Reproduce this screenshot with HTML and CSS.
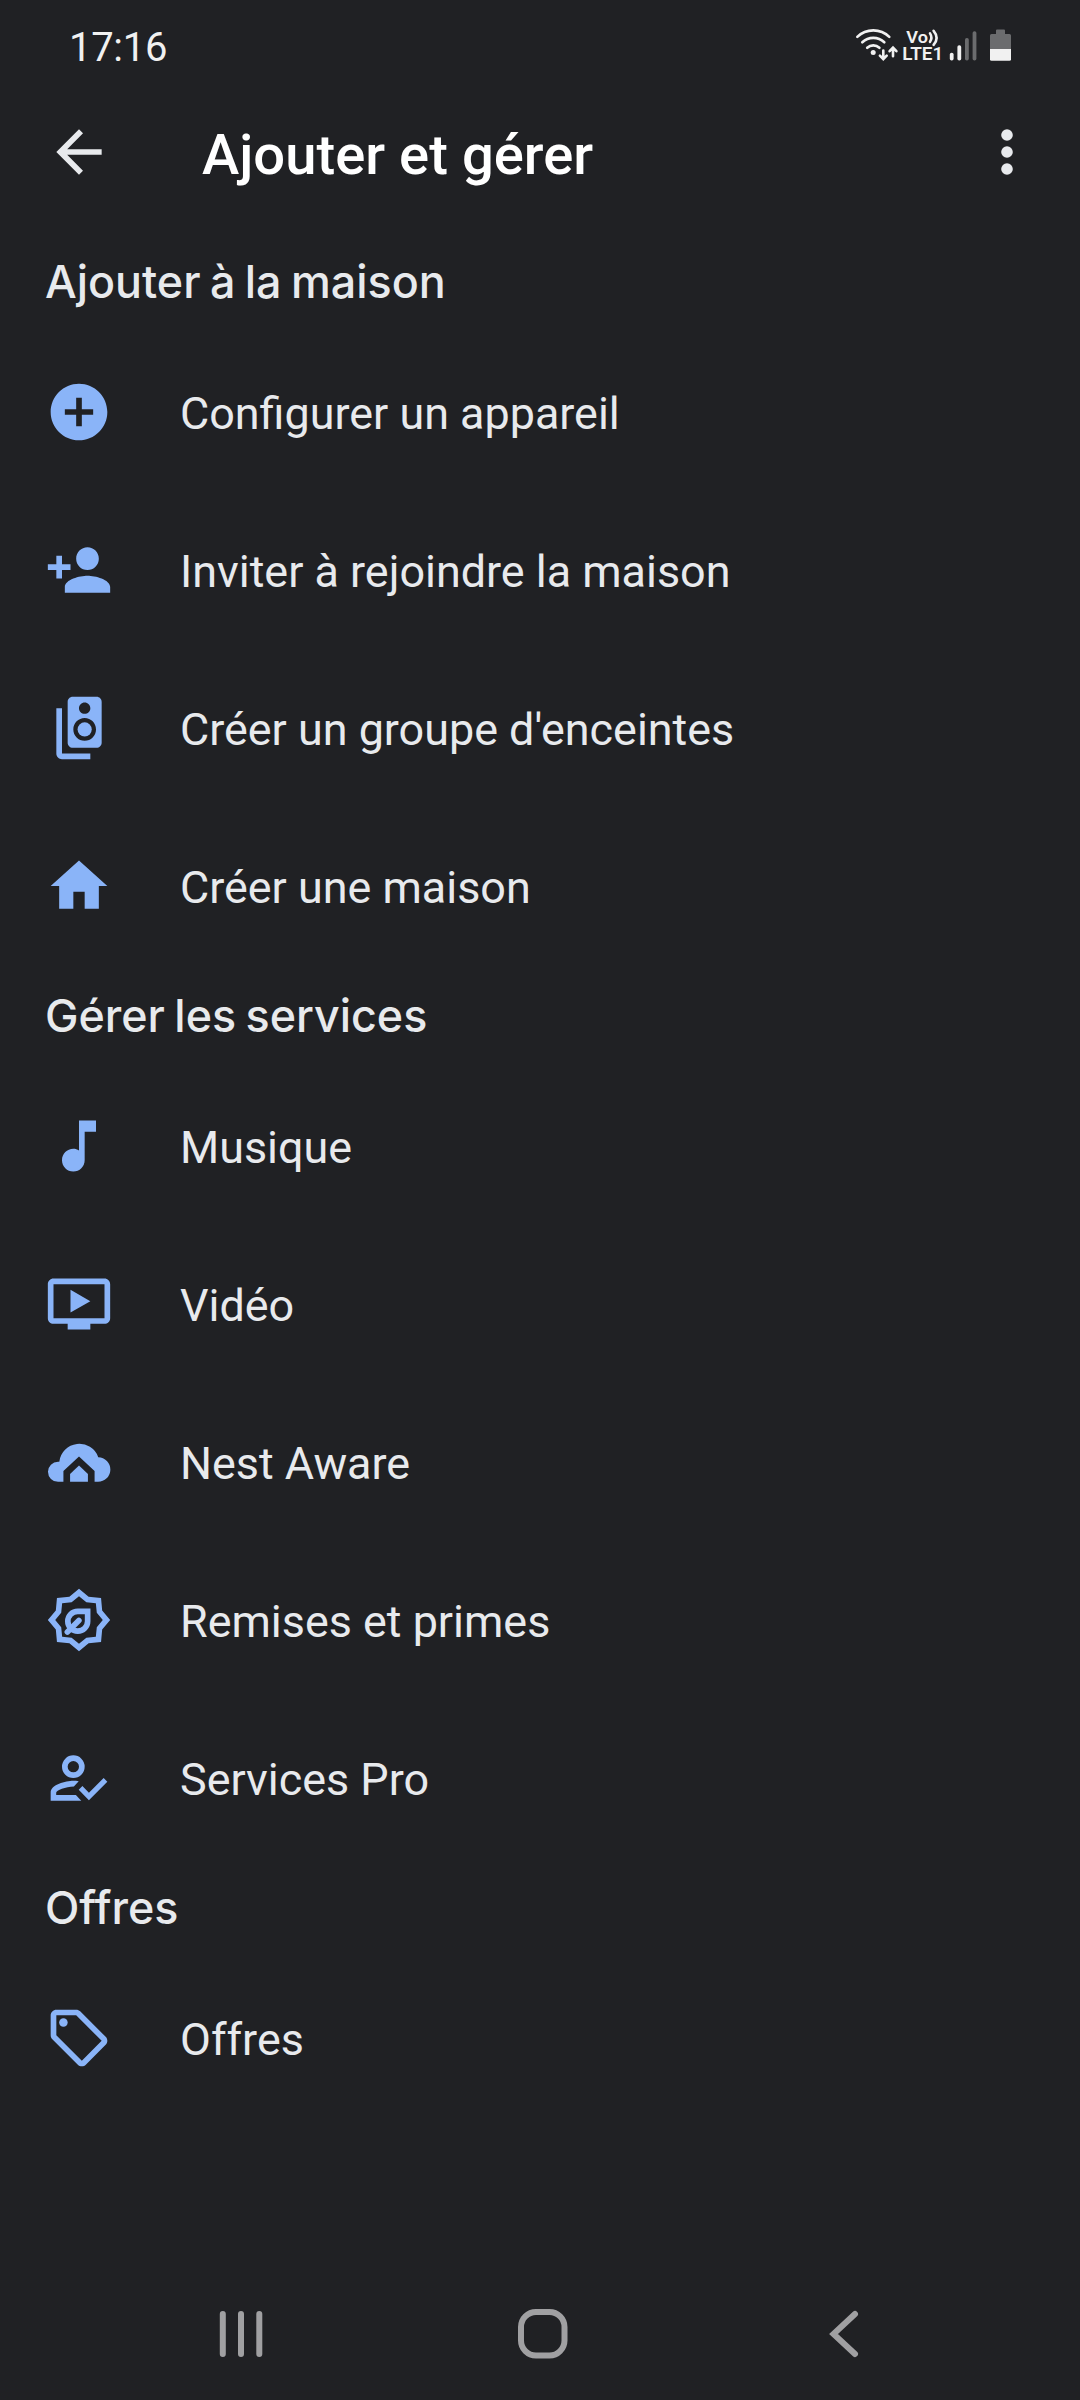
FILE: index.html
```html
<!DOCTYPE html>
<html lang="fr">
<head>
<meta charset="utf-8">
<title>Ajouter et gérer</title>
<link rel="stylesheet" href="styles.css">
</head>
<body>
<div class="screen">
  <div class="status-bar">
    <span class="clock">17:16</span>
    <svg class="status-icons" width="160" height="40" viewBox="854 26 160 40">
      <g class="line">
        <path d="M857.3 36.9a23 23 0 0 1 32 0"/>
        <path d="M862.3 42.3a16 16 0 0 1 22 0"/>
        <path d="M867.2 47.8a9 9 0 0 1 12.2 0"/>
        <path d="M883.3 50.5v8.2M879.9 55.6l3.4 3.6 3.4-3.6M893 56.2v-8.2M889.6 51.2l3.4-3.6 3.4 3.6"/>
        <path d="M930 33.4q2.8 4.200 0 8.400M933.6 30.800q6 7.200 0 14"/>
      </g>
      <circle class="solid" cx="873.2" cy="52.4" r="2.5"/>
      <text class="net" x="906.3" y="42.6" font-size="16.8" textLength="21.6" lengthAdjust="spacingAndGlyphs">Vo</text>
      <text class="net" x="902.2" y="60.2" font-size="17.8" textLength="41" lengthAdjust="spacingAndGlyphs">LTE1</text>
      <rect class="solid" x="949.8" y="52.8" width="3.8" height="7.8" rx="1.8"/>
      <rect class="solid" x="957.4" y="45.3" width="3.8" height="15.3" rx="1.8"/>
      <rect class="dim" x="965" y="38" width="3.8" height="22.6" rx="1.8"/>
      <rect class="dim" x="972.6" y="31.3" width="3.8" height="29.3" rx="1.8"/>
      <path class="dim" d="M996 30.500a1 1 0 0 1 1-1h7a1 1 0 0 1 1 1v3.500h4.500a1.500 1.500 0 0 1 1.500 1.500V49h-21V35.500a1.500 1.500 0 0 1 1.500-1.500h4.500z"/>
      <path class="solid" d="M990 49h21v10.200a1.500 1.500 0 0 1-1.500 1.500h-18a1.500 1.500 0 0 1-1.500-1.500z"/>
    </svg>
  </div>

  <header class="app-bar">
    <svg class="icon light" viewBox="0 0 24 24"><path d="M20 11H7.830l5.590-5.590L12 4l-8 8 8 8 1.410-1.410L7.830 13H20v-2z"/></svg>
    <h1 class="title">Ajouter et gérer</h1>
    <svg class="icon light" viewBox="0 0 24 24"><circle cx="12" cy="6" r="2.050"/><circle cx="12" cy="12" r="2.050"/><circle cx="12" cy="18" r="2.050"/></svg>
  </header>

  <main class="content">
    <section>
      <h2 class="heading">Ajouter à la maison</h2>
      <div class="row">
        <svg class="icon" viewBox="0 0 24 24"><path d="M12 2C6.480 2 2 6.480 2 12s4.480 10 10 10 10-4.480 10-10S17.520 2 12 2zm5 11h-4v4h-2v-4H7v-2h4V7h2v4h4v2z"/></svg>
        <span class="label">Configurer un appareil</span>
      </div>
      <div class="row">
        <svg class="icon" viewBox="0 0 24 24"><path d="M15 12c2.210 0 4-1.790 4-4s-1.790-4-4-4-4 1.790-4 4 1.790 4 4 4zm-9-2V7H4v3H1v2h3v3h2v-3h3v-2H6zm9 4c-2.670 0-8 1.340-8 4v2h16v-2c0-2.660-5.330-4-8-4z"/></svg>
        <span class="label">Inviter à rejoindre la maison</span>
      </div>
      <div class="row">
        <svg class="icon" viewBox="0 0 24 24"><path d="M18.200 1H9.800C8.810 1 8 1.810 8 2.800v14.400c0 .990.810 1.790 1.800 1.790l8.400.010c.990 0 1.800-.810 1.800-1.800V2.800c0-.990-.810-1.800-1.800-1.800zM14 3c1.100 0 2 .890 2 2s-.900 2-2 2-2-.890-2-2 .900-2 2-2zm0 13.500c-2.210 0-4-1.790-4-4s1.790-4 4-4 4 1.790 4 4-1.790 4-4 4z"/><circle cx="14" cy="12.500" r="2.500"/><path d="M6 5H4v16c0 1.100.890 2 2 2h10v-2H6V5z"/></svg>
        <span class="label">Créer un groupe d'enceintes</span>
      </div>
      <div class="row">
        <svg class="icon" viewBox="0 0 24 24"><path d="M10 20v-6h4v6h5v-8h3L12 3 2 12h3v8z"/></svg>
        <span class="label">Créer une maison</span>
      </div>
    </section>

    <section>
      <h2 class="heading">Gérer les services</h2>
      <div class="row">
        <svg class="icon" viewBox="0 0 24 24"><path d="M12 3v10.550c-.590-.340-1.270-.550-2-.550-2.210 0-4 1.790-4 4s1.790 4 4 4 4-1.790 4-4V7h4V3h-6z"/></svg>
        <span class="label">Musique</span>
      </div>
      <div class="row">
        <svg class="icon" viewBox="0 0 24 24"><path d="M21 3H3c-1.110 0-2 .890-2 2v12c0 1.100.890 2 2 2h5v2h8v-2h5c1.100 0 2-.900 2-2V5c0-1.110-.900-2-2-2zm0 14H3V5h18v12zM16 11l-7 4V7z"/></svg>
        <span class="label">Vidéo</span>
      </div>
      <div class="row">
        <svg class="icon" viewBox="0 0 24 24"><path d="M4.600 19a3.550 3.550 0 0 1 0-7.100H5.050A7.100 7.100 0 0 1 18.800 10.300 4.350 4.350 0 0 1 18.650 19H17.500V15.200L12 10.100 6.500 15.200V19z"/><path d="M8.850 19v-2.800L12 13.200l3.150 3V19z"/></svg>
        <span class="label">Nest Aware</span>
      </div>
      <div class="row">
        <svg class="icon" viewBox="-12 -12 24 24"><path fill-rule="evenodd" d="M0-11 3.390-8.180 7.780-7.780 8.180-3.390 11 0 8.180 3.390 7.780 7.780 3.390 8.180 0 11-3.390 8.180-7.780 7.780-8.180 3.390-11 0-8.180-3.390-7.780-7.780-3.390-8.180zM0-8.400-2.600-6.280-5.940-5.940-6.280-2.600-8.400 0-6.280 2.600-5.940 5.940-2.600 6.280 0 8.400 2.600 6.280 5.940 5.940 6.280 2.600 8.400 0 6.280-2.600 5.940-5.940 2.600-6.280z"/><path class="outline" d="M3.050-3.050H-.450a3.500 3.500 0 1 0 3.500 3.500z"/><path class="outline round" d="M-4.100 4.200-.050.150"/></svg>
        <span class="label">Remises et primes</span>
      </div>
      <div class="row">
        <svg class="icon" viewBox="0 0 24 24"><path fill-rule="evenodd" d="M10 4a4 4 0 1 1 0 8 4 4 0 0 1 0-8zm0 2a2 2 0 1 0 0 4 2 2 0 0 0 0-4z"/><path fill-rule="evenodd" d="M2 20v-2.900C2 14.400 7.300 13 10 13c.600 0 1.200.050 1.900.150L10.200 15C7.300 15.100 3.950 16.300 3.950 17.200V18H10.900l1.900 2z"/><path d="M15.500 19.850l-3.600-3.700 1.300-1.350 2.300 2.400 5.200-5.200 1.300 1.300z"/></svg>
        <span class="label">Services Pro</span>
      </div>
    </section>

    <section>
      <h2 class="heading">Offres</h2>
      <div class="row">
        <svg class="icon" viewBox="0 0 24 24"><path d="M21.410 11.580l-9-9C12.050 2.220 11.550 2 11 2H4c-1.100 0-2 .900-2 2v7c0 .550.220 1.050.590 1.420l9 9c.360.360.860.580 1.410.580s1.050-.220 1.410-.590l7-7c.370-.360.590-.860.590-1.410s-.230-1.060-.590-1.420zM13 20.010L4 11V4h7v-.010l9 9-7 7.020z"/><circle cx="6.500" cy="6.500" r="1.500"/></svg>
        <span class="label">Offres</span>
      </div>
    </section>
  </main>

  <nav class="nav-bar">
    <svg class="nav-icon" viewBox="0 0 52 52"><path d="M7.800 6v40M26 6v40M44.300 6v40"/></svg>
    <svg class="nav-icon" viewBox="0 0 52 52"><rect x="4" y="4" width="43.500" height="43.500" rx="15"/></svg>
    <svg class="nav-icon" viewBox="0 0 52 52"><path d="M36 6 14.500 26 36 46"/></svg>
  </nav>
</div>
</body>
</html>
```
FILE: styles.css
```css
* {
  box-sizing: border-box;
}

body {
  margin: 0;
  background: #202124;
  color: #e8eaed;
  font-family: Roboto, sans-serif;
}

h1,
h2 {
  margin: 0;
  font-weight: 500;
}

svg {
  display: block;
  flex: none;
}

.screen {
  width: 1080px;
  height: 2400px;
  display: flex;
  flex-direction: column;
}

/* System status bar */
.status-bar {
  height: 94px;
  padding: 0 66px 0 69px;
  display: flex;
  align-items: center;
  justify-content: space-between;
}

.clock {
  color: #f1f1f1;
  font-size: 40px;
  letter-spacing: -0.3px;
}

.status-icons {
  margin-bottom: 2px;
}

.status-icons .line {
  fill: none;
  stroke: #f1f1f1;
  stroke-width: 2.600;
  stroke-linecap: round;
}

.solid,
.net {
  fill: #f1f1f1;
}

.net {
  font-weight: 600;
}

.dim {
  fill: #6b6c6e;
}

/* App bar */
.app-bar {
  height: 116px;
  padding: 0 39px 0 45px;
  display: flex;
  align-items: center;
}

.title {
  flex: 1;
  margin-left: 89px;
  padding-top: 6px;
  color: #fff;
  font-size: 56.200px;
}

.icon {
  width: 68px;
  height: 68px;
  fill: #8ab4f8;
}

.icon.light {
  fill: #e8eaed;
}

.outline {
  fill: none;
  stroke: #8ab4f8;
  stroke-width: 2;
}

.round {
  stroke-linecap: round;
}

/* Settings list */
.content {
  flex: 1;
  padding: 21px 45px 0;
}

.heading {
  height: 102px;
  line-height: 102px;
  font-family: Inter, Roboto, sans-serif;
  font-size: 44.800px;
  word-spacing: -2.500px;
}

.row {
  height: 158px;
  display: flex;
  align-items: center;
  gap: 67px;
}

.label {
  padding-top: 3px;
  font-size: 44.900px;
}

/* System navigation */
.nav-bar {
  height: 132px;
  padding: 0 209px 0 215px;
  display: flex;
  align-items: center;
  justify-content: space-between;
}

.nav-icon {
  width: 52px;
  height: 52px;
  fill: none;
  stroke: #a0a0a2;
  stroke-width: 6;
  stroke-linecap: round;
}
```
